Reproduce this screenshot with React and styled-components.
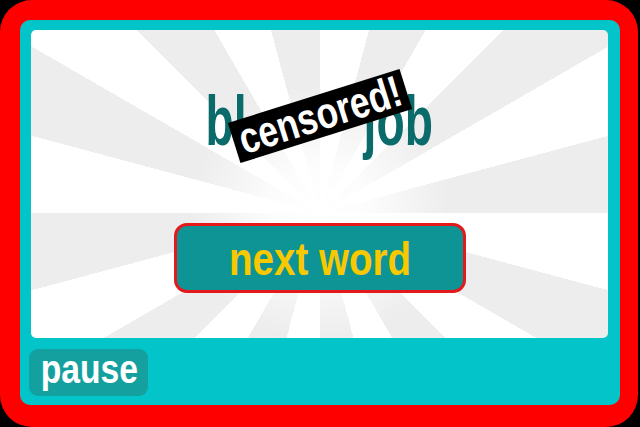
import React from 'react';
import styled, { createGlobalStyle } from 'styled-components';

const GlobalStyle = createGlobalStyle`
  html, body {
    margin: 0;
    padding: 0;
    background: #000;
  }
  body {
    font-family: 'Liberation Sans', Arial, sans-serif;
    font-weight: 700;
  }
`;

const Frame = styled.div`
  width: 638px;
  height: 427px;
  box-sizing: border-box;
  background: #ff0000;
  border-radius: 32px;
  padding: 20px 18px 22px 20px;
`;

const Board = styled.div`
  height: 100%;
  box-sizing: border-box;
  background: #03c4c8;
  border-radius: 10px;
  padding: 10px 12px 9px 9px;
  display: flex;
  flex-direction: column;
  gap: 11px;
`;

const Panel = styled.div`
  height: 308px;
  margin-left: 2px;
  border-radius: 5px;
  background:
    radial-gradient(circle at 289px 183px, #ffffff 0px, rgba(255, 255, 255, 0.85) 50px, rgba(255, 255, 255, 0) 130px),
    repeating-conic-gradient(from 0deg at 289px 183px, #ffffff 0deg 15deg, #ededed 15deg 30deg);
  display: flex;
  flex-direction: column;
  align-items: center;
  padding-top: 56px;
  box-sizing: border-box;
`;

/* the game's lettering is a bold condensed face: squeeze Liberation Sans Bold */
const Narrow = styled.span`
  display: inline-block;
  transform: scaleX(${(p) => p.$squeeze || 0.82});
  white-space: nowrap;
`;

const WordWrap = styled.div`
  position: relative;
`;

const Word = styled.div`
  font-size: 70px;
  line-height: 70px;
  color: #0b6a6a;
`;

/* letters hidden under the sticker */
const Masked = styled.span`
  color: transparent;
  padding: 0 40px;
`;

const Censor = styled.div`
  position: absolute;
  left: 50%;
  top: 30px;
  width: 180px;
  height: 42px;
  transform: translate(-50%, -50%) rotate(-17.5deg);
  background: #000;
  color: #fff;
  font-size: 44px;
  line-height: 42px;
  display: flex;
  justify-content: center;
  align-items: center;
  padding-bottom: 2px;
  box-sizing: border-box;
`;

const NextButton = styled.button`
  margin-top: 67px;
  width: 292px;
  height: 70px;
  box-sizing: border-box;
  border: 3px solid #e3191b;
  border-radius: 13px;
  background: #0e9494;
  color: #f8c800;
  font-family: inherit;
  font-weight: 700;
  font-size: 47px;
  line-height: 47px;
  display: flex;
  align-items: center;
  justify-content: center;
  padding: 0;
`;

const PauseButton = styled.button`
  align-self: flex-start;
  width: 119px;
  height: 47px;
  box-sizing: border-box;
  border: none;
  border-radius: 9px;
  background: #15a0a0;
  color: #fff;
  font-family: inherit;
  font-weight: 700;
  font-size: 41px;
  line-height: 41px;
  display: flex;
  align-items: center;
  justify-content: center;
  padding: 0 0 6px 2px;
`;

export default function App() {
  return (
    <>
      <GlobalStyle />
      <Frame>
        <Board>
          <Panel>
            <WordWrap>
              <Word>
                <Narrow $squeeze={0.66}>
                  bl<Masked>ow</Masked>job
                </Narrow>
              </Word>
              <Censor>
                <Narrow $squeeze={0.8}>censored!</Narrow>
              </Censor>
            </WordWrap>
            <NextButton>
              <Narrow>next word</Narrow>
            </NextButton>
          </Panel>
          <PauseButton>
            <Narrow>pause</Narrow>
          </PauseButton>
        </Board>
      </Frame>
    </>
  );
}
